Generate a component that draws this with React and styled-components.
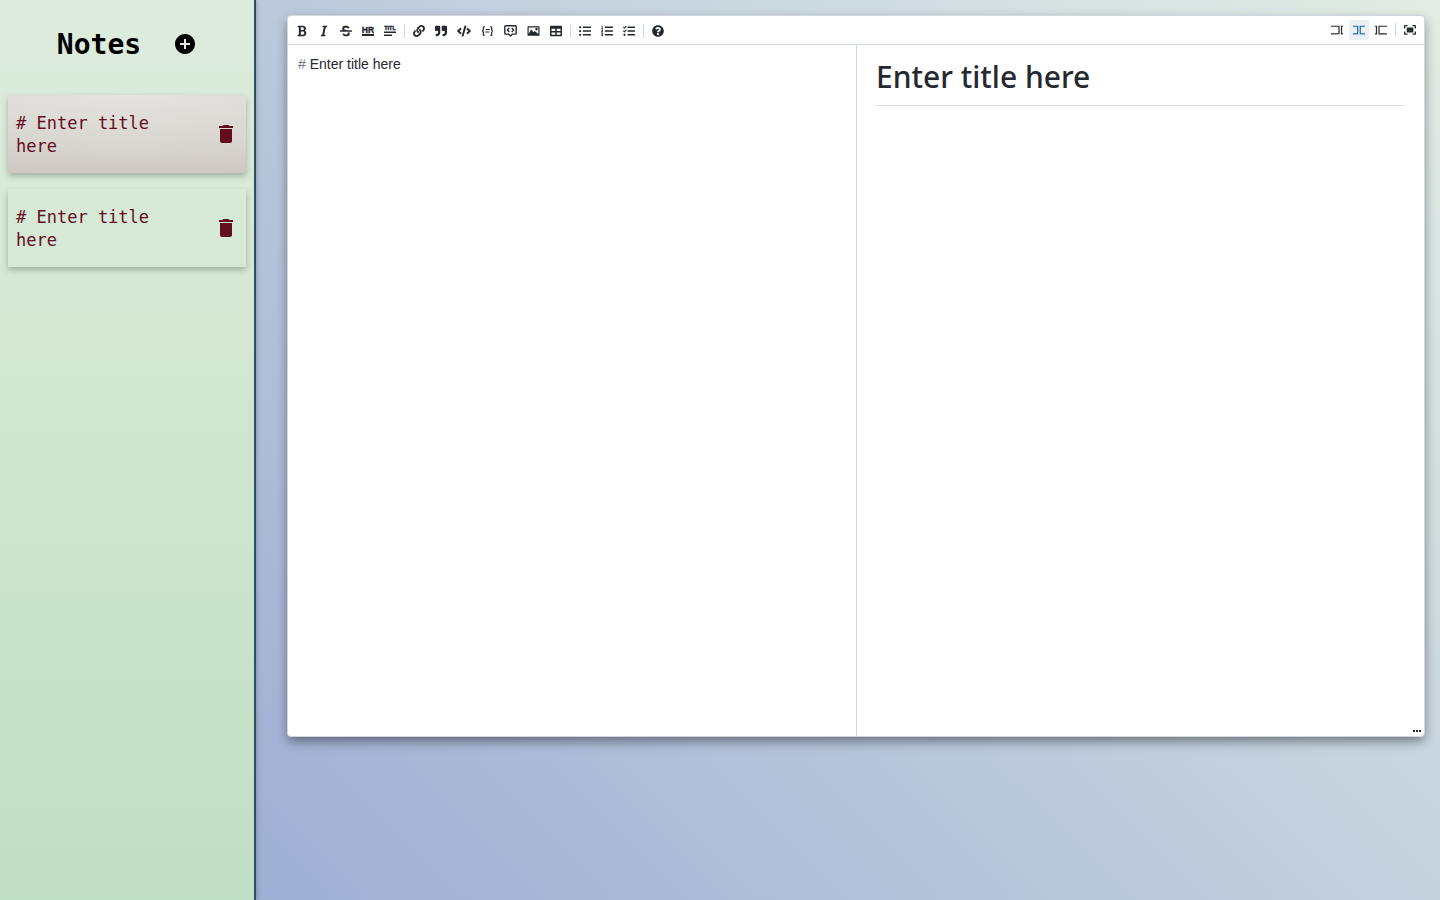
import React, { useState } from "react";
import styled, { createGlobalStyle } from "styled-components";
import {
  FaStrikethrough, FaLink, FaQuoteRight, FaCode,
  FaTable, FaListUl, FaListOl, FaTasks, FaQuestionCircle,
} from "react-icons/fa";
import { MdDelete, MdAddCircle } from "react-icons/md";

const GlobalStyle = createGlobalStyle`
  *, *::before, *::after { box-sizing: border-box; }
  body { margin: 0; }
`;

const Page = styled.div`
  display: grid;
  grid-template-columns: 256px minmax(0, 1fr);
  min-height: 100vh;
  background: linear-gradient(45deg, #96a6d2 0%, #e2ede5 100%);
`;

const Sidebar = styled.aside`
  border-right: 2px solid #2f4f5f;
  background: linear-gradient(0deg, #c1dfc4 0%, #deecdd 100%);
  box-shadow: 1px 0 4px rgba(0, 0, 0, 0.2);
  font-family: "DejaVu Sans Mono", "Liberation Mono", monospace;
`;

const SidebarHeader = styled.header`
  display: flex;
  align-items: center;
  justify-content: center;
  gap: 32px;
  height: 88px;
`;

const SidebarTitle = styled.h1`
  margin: 0;
  padding-top: 2px;
  font-size: 28px;
  line-height: 40px;
  font-weight: 700;
  color: #000;
`;

const IconButton = styled.button`
  display: flex;
  padding: 0;
  border: 0;
  background: none;
  color: ${(p) => p.$color};
  cursor: pointer;
`;

const NoteList = styled.ul`
  display: flex;
  flex-direction: column;
  gap: 16px;
  margin: 0;
  padding: 7px 8px;
  list-style: none;
`;

const NoteCard = styled.li`
  display: flex;
  align-items: center;
  justify-content: space-between;
  height: 78px;
  padding: 0 8px;
  background: ${(p) =>
    p.$active
      ? "radial-gradient(ellipse 200% 110% at 50% 0%, #e4e3df 0%, #d9d5d0 60%, #cbc5bd 100%)"
      : "transparent"};
  box-shadow: 0 3px 6px rgba(0, 0, 0, 0.25);
`;

const NoteName = styled.button`
  width: 160px;
  padding: 2px 0 0;
  border: 0;
  background: none;
  color: #640d1e;
  font: 17px/23px "DejaVu Sans Mono", "Liberation Mono", monospace;
  text-align: left;
  cursor: pointer;
`;

const Main = styled.main`
  padding: 16px 16px 16px 32px;
`;

const Editor = styled.section`
  display: flex;
  flex-direction: column;
  height: 80vh;
  border-radius: 3px;
  background: #fff;
  box-shadow: 0 0 0 1px #d0d7de, 0 5px 12px rgba(0, 0, 0, 0.45);
  color: #24292f;
`;

const Toolbar = styled.div`
  display: flex;
  align-items: center;
  justify-content: space-between;
  height: 29px;
  padding: 0 3px;
  border-bottom: 1px solid #d0d7de;
`;

const ToolGroup = styled.div`
  display: flex;
  align-items: center;
  padding-top: ${(p) => (p.$lowered ? "2px" : "0")};
`;

const Tool = styled.button`
  display: flex;
  height: 20px;
  margin: 0 1px;
  padding: 4px;
  border: 0;
  border-radius: 2px;
  background: ${(p) => (p.$active ? "#ebeff2" : "none")};
  color: ${(p) => (p.$active ? "#1666c4" : "#24292f")};
  cursor: pointer;
`;

const Divider = styled.span`
  width: 1px;
  height: 14px;
  margin: 0 3px;
  background: #d0d7de;
`;

const Panes = styled.div`
  position: relative;
  display: grid;
  grid-template-columns: 1fr 1fr;
  flex: 1;
  min-height: 0;
`;

const Source = styled.div`
  display: grid;
  padding: 10px;
  font: 14px/18px "Liberation Sans", Arial, sans-serif;

  & > * {
    grid-area: 1 / 1;
  }
`;

const Highlight = styled.pre`
  margin: 0;
  font: inherit;
  pointer-events: none;
`;

const Mark = styled.span`
  color: #6e7781;
`;

const SourceInput = styled.textarea`
  padding: 0;
  border: 0;
  outline: 0;
  background: none;
  color: transparent;
  caret-color: #24292f;
  font: inherit;
  resize: none;
`;

const Preview = styled.article`
  padding: 10px 20px 10px 19px;
  border-left: 1px solid #d0d7de;
`;

const PreviewTitle = styled.h1`
  margin: 0;
  padding-bottom: 7px;
  border-bottom: 1px solid #d8dee4;
  font: 500 30px/43px "Noto Sans", sans-serif;
`;

const DragBar = styled.div`
  position: absolute;
  right: 0;
  bottom: 0;
  display: flex;
  padding: 4px 3px;
  cursor: row-resize;
`;

const Svg = ({ size = 12, box = "0 0 520 520", children }) => (
  <svg width={size} height="12" viewBox={box} fill="currentColor" aria-hidden="true">
    {children}
  </svg>
);

const BoldIcon = () => (
  <Svg box="0 0 384 512">
    <path d="M304.793 243.891c33.639-18.537 53.657-54.16 53.657-95.693 0-48.236-26.25-87.626-68.626-104.179C265.138 34.01 240.849 32 209.661 32H24c-8.837 0-16 7.163-16 16v33.049c0 8.837 7.163 16 16 16h33.113v318.53H24c-8.837 0-16 7.163-16 16V464c0 8.837 7.163 16 16 16h195.69c24.203 0 44.834-1.289 66.866-7.584C337.52 457.193 376 410.647 376 350.014c0-52.168-26.573-91.684-71.207-106.123zM142.217 100.809h67.444c16.294 0 27.536 2.019 37.525 6.717 15.828 8.479 24.906 26.502 24.906 49.446 0 35.029-20.32 56.79-53.029 56.79h-76.846V100.809zm112.642 305.475c-10.14 4.056-22.677 4.907-31.409 4.907h-81.233V281.943h84.367c39.645 0 63.057 25.38 63.057 63.551.001 28.425-13.66 52.483-34.782 60.79z" />
  </Svg>
);

const ItalicIcon = () => (
  <Svg box="0 0 320 512">
    <path d="M204.758 416h-33.849l62.092-320h40.725a16 16 0 0 0 15.704-12.937l6.242-32C297.599 41.184 290.034 32 279.968 32H120.235a16 16 0 0 0-15.704 12.937l-6.242 32C96.362 86.816 103.927 96 113.993 96h33.846l-62.09 320H46.278a16 16 0 0 0-15.704 12.935l-6.245 32C22.402 470.815 29.967 480 40.034 480h158.479a16 16 0 0 0 15.704-12.935l6.245-32c1.927-9.88-5.638-19.065-15.704-19.065z" />
  </Svg>
);

const HrIcon = () => (
  <Svg box="0 0 12 12">
    <text x="6" y="7.500" textAnchor="middle" fontFamily="Liberation Sans" fontWeight="700" fontSize="8.500" stroke="currentColor" strokeWidth="0.4">HR</text>
    <rect y="9" width="12" height="2" />
  </Svg>
);

const TitleIcon = () => (
  <Svg box="0 0 12 12">
    <text x="6" y="5" textAnchor="middle" fontFamily="Liberation Sans" fontWeight="700" fontSize="5.500" stroke="currentColor" strokeWidth="0.4">TITL</text>
    <rect y="6.500" width="12" height="1.500" />
    <rect y="9.500" width="8" height="1.500" />
  </Svg>
);

const CodeBlockIcon = () => (
  <Svg size={13} box="0 0 156 156">
    <path d="M42 20H36Q24 20 24 34V58Q24 78 6 78Q24 78 24 98V122Q24 136 36 136H42M114 20H120Q132 20 132 34V58Q132 78 150 78Q132 78 132 98V122Q132 136 120 136H114" fill="none" stroke="currentColor" strokeWidth="16" />
    <path d="M54 52h54v14H54zM48 84h54v14H48z" />
  </Svg>
);

const CommentIcon = () => (
  <Svg size={13} box="0 0 13 12">
    <path d="M1.700.8h9.600q.9 0 .9.9v6.500q0 .9-.9.9H8.400L6.500 11 4.600 9.100H1.700q-.9 0-.9-.9V1.700q0-.9.9-.9zM5.300 3.100 3.400 5l1.900 1.900M7.700 3.100 9.600 5 7.700 6.900" fill="none" stroke="currentColor" strokeWidth="1.400" />
  </Svg>
);

const ImageIcon = () => (
  <Svg size={13} box="0 0 20 20">
    <path d="M15 9c1.100 0 2-.9 2-2s-.9-2-2-2-2 .9-2 2 .9 2 2 2zm4-7H1c-.55 0-1 .45-1 1v14c0 .55.45 1 1 1h18c.55 0 1-.45 1-1V3c0-.55-.45-1-1-1zm-1 13l-6-5-2 2-4-5-4 8V4h16v11z" />
  </Svg>
);

const EditIcon = () => (
  <Svg>
    <polygon points="0 71.293 0 122 319 122 319 397 0 397 0 449.707 372 449.413 372 71.293" />
    <polygon points="429 71.293 520 71.293 520 122 481 123 481 396 520 396 520 449.707 429 449.413" />
  </Svg>
);

const LiveIcon = () => (
  <Svg>
    <polygon points="0 71.293 0 122 179 122 179 397 0 397 0 449.707 232 449.413 232 71.293" />
    <polygon points="289 71.293 520 71.293 520 122 341 123 341 396 520 396 520 449.707 289 449.413" />
  </Svg>
);

const PreviewIcon = () => (
  <Svg>
    <polygon points="0 71.293 0 122 38.023 123 38.023 398 0 397 0 449.707 91.023 450.413 91.023 72.293" />
    <polygon points="148.023 72.293 520 71.293 520 122 200.023 124 200.023 397 520 396 520 449.707 148.023 450.413" />
  </Svg>
);

const FullscreenIcon = () => (
  <Svg>
    <path d="M118 171v171c0 12 9 23 23 23h242c11 0 23-9 23-23V171c0-11-9-23-23-23H141c-14 0-23 9-23 23zM465 413h-95v58h104c26 0 46-20 46-46V321h-58v92zM471 43H367v58h95v95h58V89c-3-26-23-46-49-46zM58 101h95V43H46C20 43 0 63 0 89v104h58zM58 321H0v104c0 26 20 46 46 46h104v-58H58z" />
  </Svg>
);

const CodeIcon = styled(FaCode)`
  width: 14px;
  height: 12px;
`;

const tools = [
  [
    ["Bold", <BoldIcon />],
    ["Italic", <ItalicIcon />],
    ["Strikethrough", <FaStrikethrough size={12} />],
    ["Insert horizontal rule", <HrIcon />],
    ["Insert title", <TitleIcon />],
  ],
  [
    ["Add a link", <FaLink size={12} />],
    ["Insert a quote", <FaQuoteRight size={12} />],
    ["Insert code", <CodeIcon />],
    ["Insert code block", <CodeBlockIcon />],
    ["Insert comment", <CommentIcon />],
    ["Add image", <ImageIcon />],
    ["Add table", <FaTable size={12} />],
  ],
  [
    ["Add unordered list", <FaListUl size={12} />],
    ["Add ordered list", <FaListOl size={12} />],
    ["Add checked list", <FaTasks size={12} />],
  ],
  [["Open help", <FaQuestionCircle size={12} />]],
];

const modes = [
  ["edit", "Edit code", <EditIcon />],
  ["live", "Live code", <LiveIcon />],
  ["preview", "Preview code", <PreviewIcon />],
];

const notes = ["# Enter title here", "# Enter title here"];

export default function App() {
  const [active, setActive] = useState(0);
  const [mode, setMode] = useState("live");
  const [text, setText] = useState("# Enter title here");
  const heading = text.replace(/^#\s*/, "");

  return (
    <>
      <GlobalStyle />
      <Page>
        <Sidebar>
          <SidebarHeader>
            <SidebarTitle>Notes</SidebarTitle>
            <IconButton $color="#000" aria-label="New note">
              <MdAddCircle size={24} />
            </IconButton>
          </SidebarHeader>
          <NoteList>
            {notes.map((note, i) => (
              <NoteCard key={i} $active={i === active}>
                <NoteName onClick={() => setActive(i)}>{note}</NoteName>
                <IconButton $color="#640d1e" aria-label="Delete note">
                  <MdDelete size={24} />
                </IconButton>
              </NoteCard>
            ))}
          </NoteList>
        </Sidebar>
        <Main>
          <Editor>
            <Toolbar>
              <ToolGroup $lowered>
                {tools.map((group, i) => (
                  <React.Fragment key={i}>
                    {i > 0 && <Divider />}
                    {group.map(([label, icon]) => (
                      <Tool key={label} aria-label={label}>{icon}</Tool>
                    ))}
                  </React.Fragment>
                ))}
              </ToolGroup>
              <ToolGroup>
                {modes.map(([id, label, icon]) => (
                  <Tool key={id} aria-label={label} $active={id === mode} onClick={() => setMode(id)}>
                    {icon}
                  </Tool>
                ))}
                <Divider />
                <Tool aria-label="Toggle fullscreen"><FullscreenIcon /></Tool>
              </ToolGroup>
            </Toolbar>
            <Panes>
              <Source>
                <Highlight aria-hidden="true">
                  <Mark>#</Mark> {heading}
                </Highlight>
                <SourceInput
                  aria-label="Note text"
                  spellCheck={false}
                  value={text}
                  onChange={(e) => setText(e.target.value)}
                />
              </Source>
              <Preview>
                <PreviewTitle>{heading}</PreviewTitle>
              </Preview>
              <DragBar>
                <svg width="8" height="2" fill="currentColor" aria-hidden="true">
                  <path d="M0 0h2v2H0zM3 0h2v2H3zM6 0h2v2H6z" />
                </svg>
              </DragBar>
            </Panes>
          </Editor>
        </Main>
      </Page>
    </>
  );
}
